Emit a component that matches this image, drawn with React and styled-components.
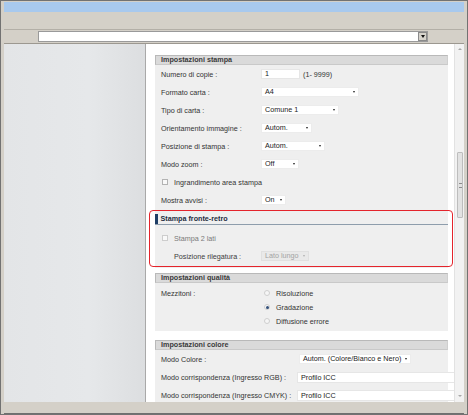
import React from "react";
import styled, { createGlobalStyle, css } from "styled-components";

const Global = createGlobalStyle`
  html, body { margin: 0; padding: 0; background: #ffffff; }
  body { font-family: "Liberation Sans", Arial, sans-serif; }
  * { box-sizing: border-box; }
`;

const Window = styled.div`
  width: 468px;
  height: 415px;
  background: #d4d0c8;
  border: 1px solid #727272;
  padding: 1px 3px 0 3px;
  display: flex;
  flex-direction: column;
  overflow: hidden;
`;

const TitleBar = styled.div`
  height: 10px;
  background: #a8c9ee;
  flex: none;
`;

const Toolbar = styled.div`
  height: 18px;
  flex: none;
  border-bottom: 1px solid #b3afa7;
`;

const AddressRow = styled.div`
  height: 14px;
  flex: none;
  display: flex;
  align-items: center;
  padding-left: 34px;
  border-bottom: 1px solid #9c9890;
`;

const AddressBox = styled.div`
  width: 390px;
  height: 11px;
  background: #ffffff;
  border: 1px solid #9a9a9a;
  display: flex;
  justify-content: flex-end;
`;

const DropButton = styled.div`
  width: 9px;
  height: 9px;
  background: #d6d3cc;
  border: 1px solid #8a8a8a;
  display: flex;
  align-items: center;
  justify-content: center;
  &::after {
    content: "";
    border-left: 2px solid transparent;
    border-right: 2px solid transparent;
    border-top: 3px solid #111;
  }
`;

const Main = styled.div`
  height: 358px;
  flex: none;
  display: flex;
`;

const Sidebar = styled.div`
  width: 142px;
  flex: none;
  background: linear-gradient(to right, #e3e5e7, #e6e8ea 60%, #dcdee0);
  border-right: 1px solid #a9a9a9;
`;

const Content = styled.div`
  flex: 1;
  display: flex;
  background: #ffffff;
  min-width: 0;
`;

const Scroll = styled.div`
  width: 308px;
  flex: none;
  overflow: hidden;
  padding: 11px 6px 0 9px;
`;

const ScrollBar = styled.div`
  width: 10px;
  flex: none;
  background: #f2f2f2;
  border-left: 1px solid #e2e2e2;
  display: flex;
  flex-direction: column;
  align-items: center;
`;

const Arrow = styled.div`
  width: 9px;
  height: 10px;
  flex: none;
  display: flex;
  align-items: center;
  justify-content: center;
  ${(p) => p.$down && css`margin-top: auto; margin-bottom: 1px;`}
  &::after {
    content: "";
    border-left: 2px solid transparent;
    border-right: 2px solid transparent;
    ${(p) =>
      p.$down
        ? css`border-top: 2px solid #a8a8a8;`
        : css`border-bottom: 2px solid #a8a8a8;`}
  }
`;

const Thumb = styled.div`
  width: 6px;
  height: 66px;
  margin-top: 98px;
  margin-left: 1px;
  background: #e2e2e2;
  border: 1px solid #bdbdbd;
  border-radius: 1px;
  display: flex;
  align-items: center;
  justify-content: center;
  &::after {
    content: "";
    width: 3px;
    height: 3px;
    border-top: 1px solid #8c8c8c;
    border-bottom: 1px solid #8c8c8c;
  }
`;

const StatusBar = styled.div`
  height: 12px;
  flex: none;
  border-bottom: 1px solid #6f6f6f;
`;

const Section = styled.div`
  margin-bottom: ${(p) => p.$gap || 0}px;
`;

const SectionHeader = styled.div`
  height: 10px;
  background: #dadada;
  border: 1px solid #b9b9b9;
  border-right-color: #cfcfcf;
  border-bottom-color: #c9c9c9;
  padding-left: 5px;
  font-size: 7.2px;
  font-weight: bold;
  color: #3a3a3a;
  line-height: 8px;
  white-space: nowrap;
`;

const Body = styled.div`
  background: #efefef;
  padding: ${(p) => p.$pad || "0"};
`;

const Row = styled.div`
  height: ${(p) => p.$h || 18}px;
  display: flex;
  align-items: center;
  padding-left: ${(p) => p.$indent || 6}px;
  font-size: 7.2px;
  color: ${(p) => p.$color || "#333"};
  white-space: nowrap;
`;

const Label = styled.div`
  width: ${(p) => p.$w || 100}px;
  flex: none;
  color: ${(p) => p.$color || "#333"};
`;

const Select = styled.div`
  position: relative;
  width: ${(p) => p.$w}px;
  height: 10px;
  flex: none;
  background: ${(p) => (p.$disabled ? "#e9e9e9" : "#ffffff")};
  color: ${(p) => (p.$disabled ? "#a3a3a3" : "#222")};
  border: 1px solid ${(p) => (p.$disabled ? "#e0e0e0" : "#ececec")};
  padding-left: 3px;
  line-height: 8px;
  font-size: 7.2px;
  &::after {
    content: "";
    position: absolute;
    right: 3px;
    top: 3px;
    border-left: 1.5px solid transparent;
    border-right: 1.5px solid transparent;
    border-top: 2px solid ${(p) => (p.$disabled ? "#b0b0b0" : "#222")};
  }
`;

const TextInput = styled.div`
  width: ${(p) => p.$w}px;
  height: ${(p) => p.$h || 10}px;
  flex: none;
  background: #ffffff;
  border: 1px solid #e6e6e6;
  padding-left: 3px;
  line-height: ${(p) => (p.$h || 10) - 2}px;
  font-size: 7.2px;
  color: #222;
`;

const Hint = styled.span`
  margin-left: 3px;
  color: #333;
`;

const Check = styled.span`
  width: 6px;
  height: 6px;
  flex: none;
  margin-right: 6px;
  background: #f9f9f9;
  border: 1px solid ${(p) => (p.$disabled ? "#cdcdcd" : "#b3b3b3")};
`;

const Duplex = styled.div`
  position: relative;
  padding-bottom: 3px;
`;

const SubHeader = styled.div`
  height: 16px;
  display: flex;
  align-items: flex-end;
  border-bottom: 1px solid #8e9dac;
  padding-bottom: 1px;
  font-size: 7.2px;
  font-weight: bold;
  color: #1f2d40;
  margin-bottom: 4px;
  &::before {
    content: "";
    width: 2.5px;
    height: 10px;
    margin-bottom: -1px;
    margin-right: 3px;
    background: #1e3e66;
  }
`;

const Highlight = styled.div`
  position: absolute;
  left: -6px;
  right: -5px;
  top: 1px;
  bottom: 1px;
  border: 1.5px solid #e4242c;
  border-radius: 4px;
  pointer-events: none;
`;

const RadioBlock = styled.div`
  display: flex;
  padding: 3px 0 3px 6px;
  font-size: 7.2px;
  color: #333;
`;

const RadioList = styled.div`
  display: flex;
  flex-direction: column;
`;

const RadioRow = styled.div`
  height: 14px;
  display: flex;
  align-items: center;
  white-space: nowrap;
`;

const Radio = styled.span`
  width: 6px;
  height: 6px;
  flex: none;
  border-radius: 50%;
  border: 1px solid #cfcfcf;
  background: #f6f6f6;
  margin-right: 6px;
  display: flex;
  align-items: center;
  justify-content: center;
  &::after {
    content: "";
    display: ${(p) => (p.$on ? "block" : "none")};
    width: 3px;
    height: 3px;
    border-radius: 50%;
    background: #33507a;
  }
`;

const RadioLabelCell = styled.div`
  width: 103px;
  flex: none;
  height: 14px;
  display: flex;
  align-items: center;
`;

const Wide = styled.div`
  width: 400px;
`;

export default function App() {
  return (
    <>
      <Global />
      <Window>
        <TitleBar />
        <Toolbar />
        <AddressRow>
          <AddressBox>
            <DropButton />
          </AddressBox>
        </AddressRow>
        <Main>
          <Sidebar />
          <Content>
            <Scroll>
              <Section $gap={5}>
                <SectionHeader>Impostazioni stampa</SectionHeader>
                <Body>
                  <Row>
                    <Label>Numero di copie :</Label>
                    <TextInput $w={39}>1</TextInput>
                    <Hint>(1- 9999)</Hint>
                  </Row>
                  <Row>
                    <Label>Formato carta :</Label>
                    <Select $w={98}>A4</Select>
                  </Row>
                  <Row>
                    <Label>Tipo di carta :</Label>
                    <Select $w={78}>Comune 1</Select>
                  </Row>
                  <Row>
                    <Label>Orientamento immagine :</Label>
                    <Select $w={51}>Autom.</Select>
                  </Row>
                  <Row>
                    <Label>Posizione di stampa :</Label>
                    <Select $w={64}>Autom.</Select>
                  </Row>
                  <Row>
                    <Label>Modo zoom :</Label>
                    <Select $w={38}>Off</Select>
                  </Row>
                  <Row $indent={7}>
                    <Check />
                    Ingrandimento area stampa
                  </Row>
                  <Row>
                    <Label>Mostra avvisi :</Label>
                    <Select $w={25}>On</Select>
                  </Row>
                  <Duplex>
                    <SubHeader>Stampa fronte-retro</SubHeader>
                    <Row $indent={7} $color="#7a7a7a">
                      <Check $disabled />
                      Stampa 2 lati
                    </Row>
                    <Row $indent={19}>
                      <Label $w={87} $color="#3c3c3c">Posizione rilegatura :</Label>
                      <Select $w={48} $disabled>Lato lungo</Select>
                    </Row>
                    <Highlight />
                  </Duplex>
                </Body>
              </Section>

              <Section $gap={9}>
                <SectionHeader>Impostazioni qualità</SectionHeader>
                <Body>
                  <RadioBlock>
                    <RadioLabelCell>Mezzitoni :</RadioLabelCell>
                    <RadioList>
                      <RadioRow>
                        <Radio />
                        Risoluzione
                      </RadioRow>
                      <RadioRow>
                        <Radio $on />
                        Gradazione
                      </RadioRow>
                      <RadioRow>
                        <Radio />
                        Diffusione errore
                      </RadioRow>
                    </RadioList>
                  </RadioBlock>
                </Body>
              </Section>

              <Section>
                <SectionHeader>Impostazioni colore</SectionHeader>
                <Body>
                  <Wide>
                    <Row>
                      <Label $w={138}>Modo Colore :</Label>
                      <Select $w={112}>Autom. (Colore/Bianco e Nero)</Select>
                    </Row>
                    <Row>
                      <Label $w={136}>Modo corrispondenza (Ingresso RGB) :</Label>
                      <TextInput $w={180} $h={11}>Profilo ICC</TextInput>
                    </Row>
                    <Row>
                      <Label $w={136}>Modo corrispondenza (Ingresso CMYK) :</Label>
                      <TextInput $w={180} $h={11}>Profilo ICC</TextInput>
                    </Row>
                  </Wide>
                </Body>
              </Section>
            </Scroll>
            <ScrollBar>
              <Arrow />
              <Thumb />
              <Arrow $down />
            </ScrollBar>
          </Content>
        </Main>
        <StatusBar />
      </Window>
    </>
  );
}
